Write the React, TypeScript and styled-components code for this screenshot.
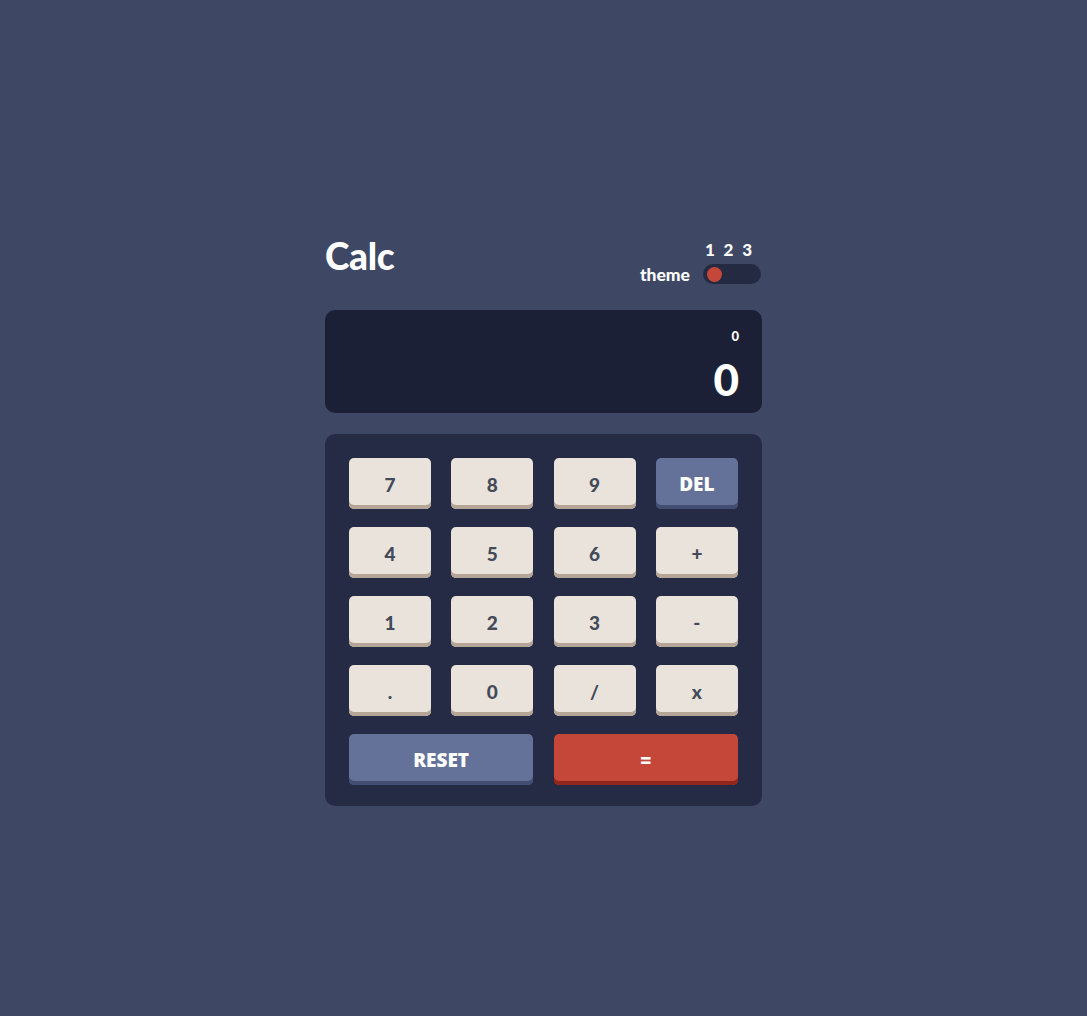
import { createGlobalStyle, styled } from "styled-components";

const GlobalStyle = createGlobalStyle`
  html, body {
    margin: 0;
    padding: 0;
    background: #3e4763;
  }
  body {
    font-family: "Lato", "Open Sans", sans-serif;
    color: #ffffff;
  }
`;

const Page = styled.main`
  min-height: 100vh;
  display: flex;
  justify-content: center;
  padding-top: 232px;
  box-sizing: border-box;
`;

const Calculator = styled.div`
  width: 437px;
  display: flex;
  flex-direction: column;
`;

const Header = styled.header`
  display: flex;
  justify-content: space-between;
  align-items: flex-end;
  height: 52px;
  margin-bottom: 26px;
`;

const Title = styled.h1`
  margin: 0;
  font-size: 37px;
  font-weight: 900;
  line-height: 1;
  letter-spacing: -0.3px;
  align-self: flex-start;
  padding-top: 5px;
`;

const ThemeBox = styled.div`
  display: flex;
  align-items: flex-end;
  gap: 13px;
  padding-right: 1px;
`;

const ThemeLabel = styled.span`
  font-size: 17.5px;
  font-weight: 900;
  line-height: 1;
  padding-bottom: 1px;
`;

const Switcher = styled.div`
  display: flex;
  flex-direction: column;
  gap: 6px;
`;

const Numbers = styled.div`
  display: flex;
  justify-content: space-between;
  padding: 0 9px 0 2px;
  font-size: 17px;
  font-weight: 900;
  line-height: 1;
`;

const Track = styled.div`
  width: 58px;
  height: 20px;
  border-radius: 10px;
  background: #252a43;
  display: flex;
  align-items: center;
  padding: 0 4px;
  box-sizing: border-box;
`;

const Knob = styled.span`
  width: 15px;
  height: 15px;
  border-radius: 50%;
  background: #c4473a;
`;

const Screen = styled.section`
  height: 103px;
  border-radius: 10px;
  background: #1c2036;
  display: flex;
  flex-direction: column;
  align-items: flex-end;
  padding: 20px 23px 0 0;
  box-sizing: border-box;
  margin-bottom: 21px;
`;

const Memory = styled.span`
  font-size: 13px;
  font-weight: 900;
  line-height: 1;
`;

const Result = styled.span`
  font-size: 44px;
  font-weight: 900;
  line-height: 1;
  margin-top: 14px;
`;

const Keypad = styled.section`
  border-radius: 10px;
  background: #252a45;
  padding: 24px 24px 21px;
  display: grid;
  grid-template-columns: repeat(4, 82px);
  column-gap: 20.3px;
  row-gap: 18px;
`;

type Tone = "light" | "blue" | "red";

const tones: Record<Tone, { bg: string; shade: string; fg: string }> = {
  light: { bg: "#eae3dc", shade: "#b4a597", fg: "#434a59" },
  blue: { bg: "#647198", shade: "#414e72", fg: "#ffffff" },
  red: { bg: "#c4473a", shade: "#93261a", fg: "#ffffff" },
};

const Key = styled.button<{ $tone: Tone; $wide?: boolean }>`
  grid-column: ${(p) => (p.$wide ? "span 2" : "span 1")};
  height: 51px;
  border: none;
  border-radius: 5px;
  background: ${(p) => tones[p.$tone].bg};
  box-shadow: inset 0 -4px 0 ${(p) => tones[p.$tone].shade};
  color: ${(p) => tones[p.$tone].fg};
  font-family: ${(p) => (p.$tone === "light" ? `"Lato", sans-serif` : `"Open Sans", sans-serif`)};
  font-size: ${(p) => (p.$tone === "light" ? "19px" : "19px")};
  font-weight: ${(p) => (p.$tone === "light" ? 900 : 800)};
  padding: 2px 0 0;
  line-height: 1;
  cursor: pointer;
`;

const digits = ["7", "8", "9", "DEL", "4", "5", "6", "+", "1", "2", "3", "-", ".", "0", "/", "x"];

export default function App() {
  return (
    <>
      <GlobalStyle />
      <Page>
        <Calculator>
          <Header>
            <Title>Calc</Title>
            <ThemeBox>
              <ThemeLabel>theme</ThemeLabel>
              <Switcher>
                <Numbers>
                  <span>1</span>
                  <span>2</span>
                  <span>3</span>
                </Numbers>
                <Track>
                  <Knob />
                </Track>
              </Switcher>
            </ThemeBox>
          </Header>
          <Screen>
            <Memory>0</Memory>
            <Result>0</Result>
          </Screen>
          <Keypad>
            {digits.map((d) => (
              <Key key={d} $tone={d === "DEL" ? "blue" : "light"}>
                {d}
              </Key>
            ))}
            <Key $tone="blue" $wide>
              RESET
            </Key>
            <Key $tone="red" $wide>
              =
            </Key>
          </Keypad>
        </Calculator>
      </Page>
    </>
  );
}
